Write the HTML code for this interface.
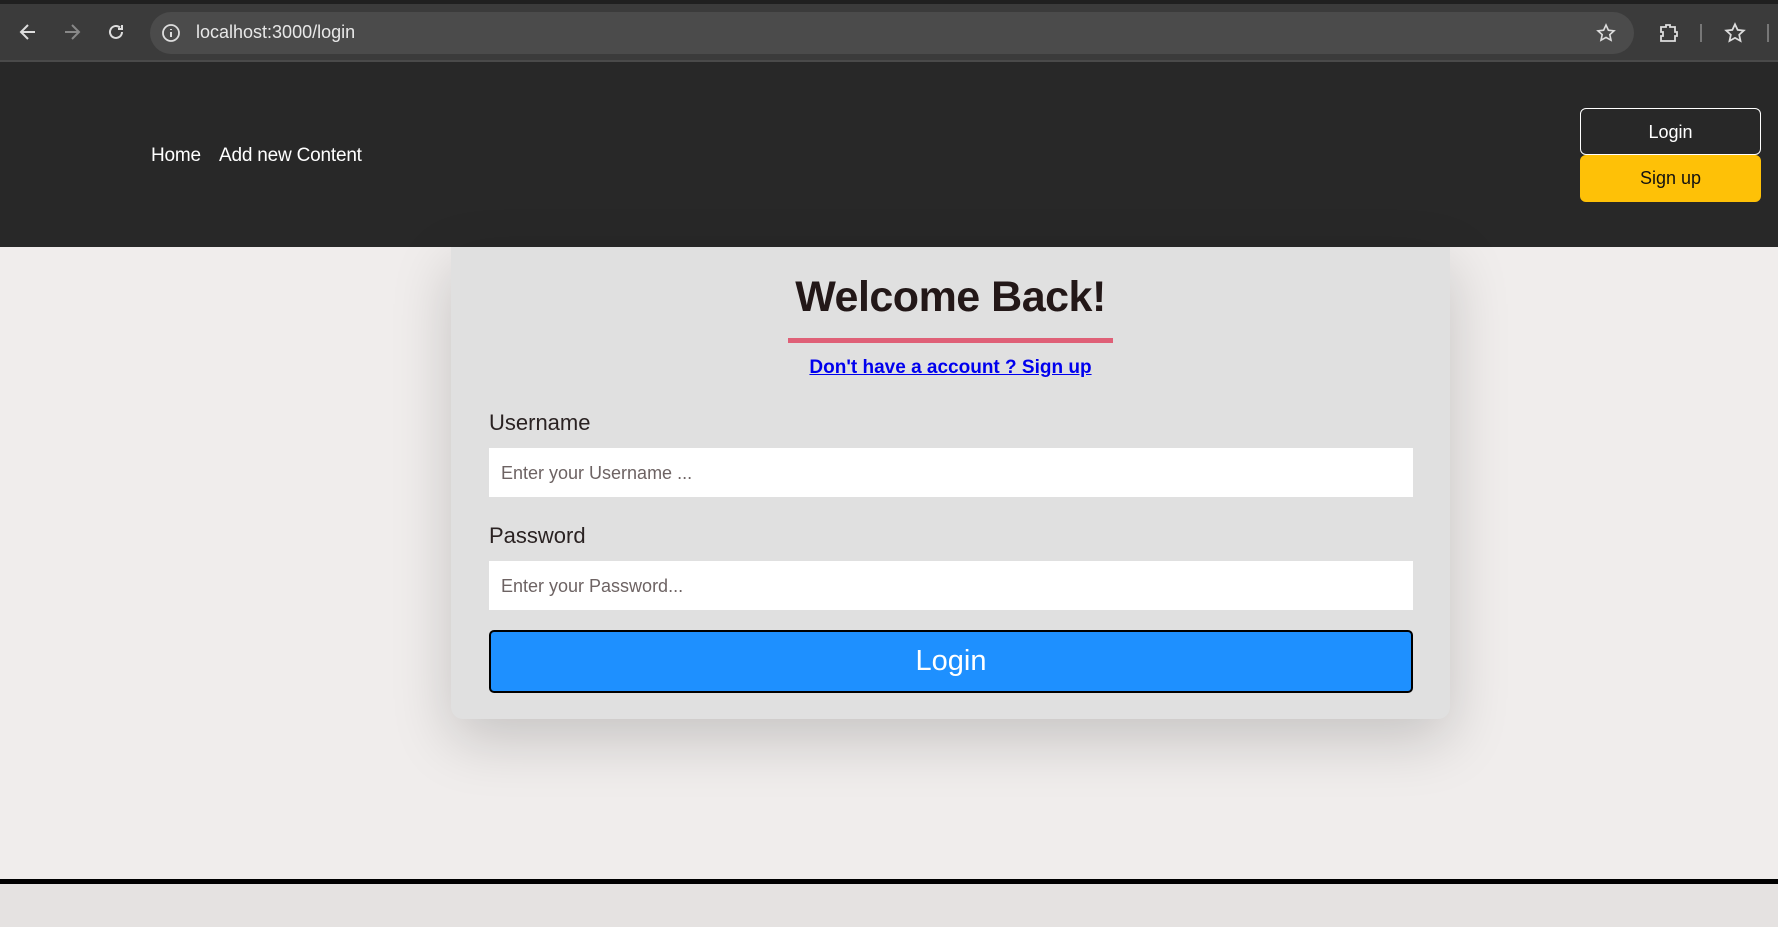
<!DOCTYPE html>
<html><head><style>
*{box-sizing:border-box;margin:0;padding:0}
body{width:1778px;height:927px;overflow:hidden;background:#f0edec;font-family:"Liberation Sans",sans-serif;position:relative}
.top{position:absolute;left:0;top:0;width:1778px;height:62px;background:#3b3b3b;border-bottom:2px solid #4a4a4a}
.tabstrip{position:absolute;left:0;top:0;width:1778px;height:4px;background:#202020}
.url{position:absolute;left:150px;top:12px;width:1484px;height:42px;border-radius:21px;background:#4b4b4b}
.url span{position:absolute;left:46px;top:10px;color:#e8e8e8;font-size:18px}
.hdr{position:absolute;left:0;top:62px;width:1778px;height:185px;background:#282828}
.nav{position:absolute;top:145px;color:#fff;font-size:19px;letter-spacing:-0.2px}
.btn{position:absolute;left:1580px;width:181px;height:47px;border-radius:6px;font-size:18px;text-align:center;line-height:46px}
.card{position:absolute;left:451px;top:247px;width:999px;height:472px;background:#e0e0e0;border-radius:0 0 12px 12px;box-shadow:0 20px 60px rgba(0,0,0,.18)}
h1{position:absolute;left:0;width:100%;top:26px;text-align:center;font-size:43px;color:#231818;font-weight:bold;letter-spacing:-0.5px}
.ul{position:absolute;left:337px;top:91px;width:325px;height:5px;background:#df6077}
.lk{position:absolute;left:0;width:100%;top:110px;text-align:center;font-size:19px;font-weight:bold;color:#0000ee;text-decoration:underline}
.lb{position:absolute;left:38px;font-size:22px;color:#2a2222}
.in{position:absolute;left:38px;width:924px;height:49px;background:#fff;color:#6d6363;font-size:18px;padding:15px 0 0 12px}
.go{position:absolute;left:38px;top:383px;width:924px;height:63px;background:#1e90ff;border:2px solid #000;border-radius:5px;color:#fff;font-size:29px;text-align:center;line-height:58px}
</style></head><body>
<div class="top"><div class="tabstrip"></div>
<svg style="position:absolute;left:18px;top:22px" width="20" height="20" viewBox="0 0 20 20"><path d="M17 10H4M10 3L3 10l7 7" stroke="#ddd" stroke-width="2" fill="none"/></svg>
<svg style="position:absolute;left:62px;top:22px" width="20" height="20" viewBox="0 0 20 20"><path d="M3 10h13M10 3l7 7-7 7" stroke="#888" stroke-width="2" fill="none"/></svg>
<svg style="position:absolute;left:106px;top:22px" width="20" height="20" viewBox="0 0 20 20"><path d="M16 10a6 6 0 1 1-2-4.5M16 3v4h-4" stroke="#ddd" stroke-width="2" fill="none"/></svg>
<div class="url"><svg style="position:absolute;left:11px;top:11px" width="20" height="20" viewBox="0 0 20 20"><circle cx="10" cy="10" r="8" stroke="#ddd" stroke-width="1.8" fill="none"/><path d="M10 9v5M10 6v1" stroke="#ddd" stroke-width="2"/></svg><span>localhost:3000/login</span>
<svg style="position:absolute;right:18px;top:11px" width="20" height="20" viewBox="0 0 20 20"><path d="M10 2l2.4 5.2 5.6.6-4.2 3.8 1.2 5.6L10 14.4 5 17.2l1.2-5.6L2 7.8l5.6-.6z" stroke="#ddd" stroke-width="1.6" fill="none"/></svg></div>
<svg style="position:absolute;left:1657px;top:22px" width="22" height="22" viewBox="0 0 22 22"><path d="M4 5h5V3h4v2h5v5h2v4h-2v5H4v-5h2v-4H4z" stroke="#ddd" stroke-width="1.8" fill="none"/></svg>
<div style="position:absolute;left:1700px;top:24px;width:2px;height:18px;background:#777"></div>
<svg style="position:absolute;left:1724px;top:22px" width="22" height="22" viewBox="0 0 20 20"><path d="M10 2l2.4 5.2 5.6.6-4.2 3.8 1.2 5.6L10 14.4 5 17.2l1.2-5.6L2 7.8l5.6-.6z" stroke="#ddd" stroke-width="1.6" fill="none"/></svg>
<div style="position:absolute;left:1767px;top:24px;width:2px;height:18px;background:#777"></div>
</div>
<div class="hdr"></div>
<div class="nav" style="left:151px">Home</div>
<div class="nav" style="left:219px">Add new Content</div>
<div class="btn" style="top:108px;border:1px solid #fff;color:#fff;background:#282828">Login</div>
<div class="btn" style="top:155px;background:#fec107;color:#111">Sign up</div>
<div class="card">
<h1>Welcome Back!</h1><div class="ul"></div>
<div class="lk">Don't have a account ? Sign up</div>
<div class="lb" style="top:163px">Username</div>
<div class="in" style="top:201px">Enter your Username ...</div>
<div class="lb" style="top:276px">Password</div>
<div class="in" style="top:314px">Enter your Password...</div>
<div class="go">Login</div>
</div>
<div style="position:absolute;left:0;top:879px;width:1778px;height:5px;background:#000"></div>
<div style="position:absolute;left:0;top:884px;width:1778px;height:43px;background:#e5e2e1"></div>
</body></html>
